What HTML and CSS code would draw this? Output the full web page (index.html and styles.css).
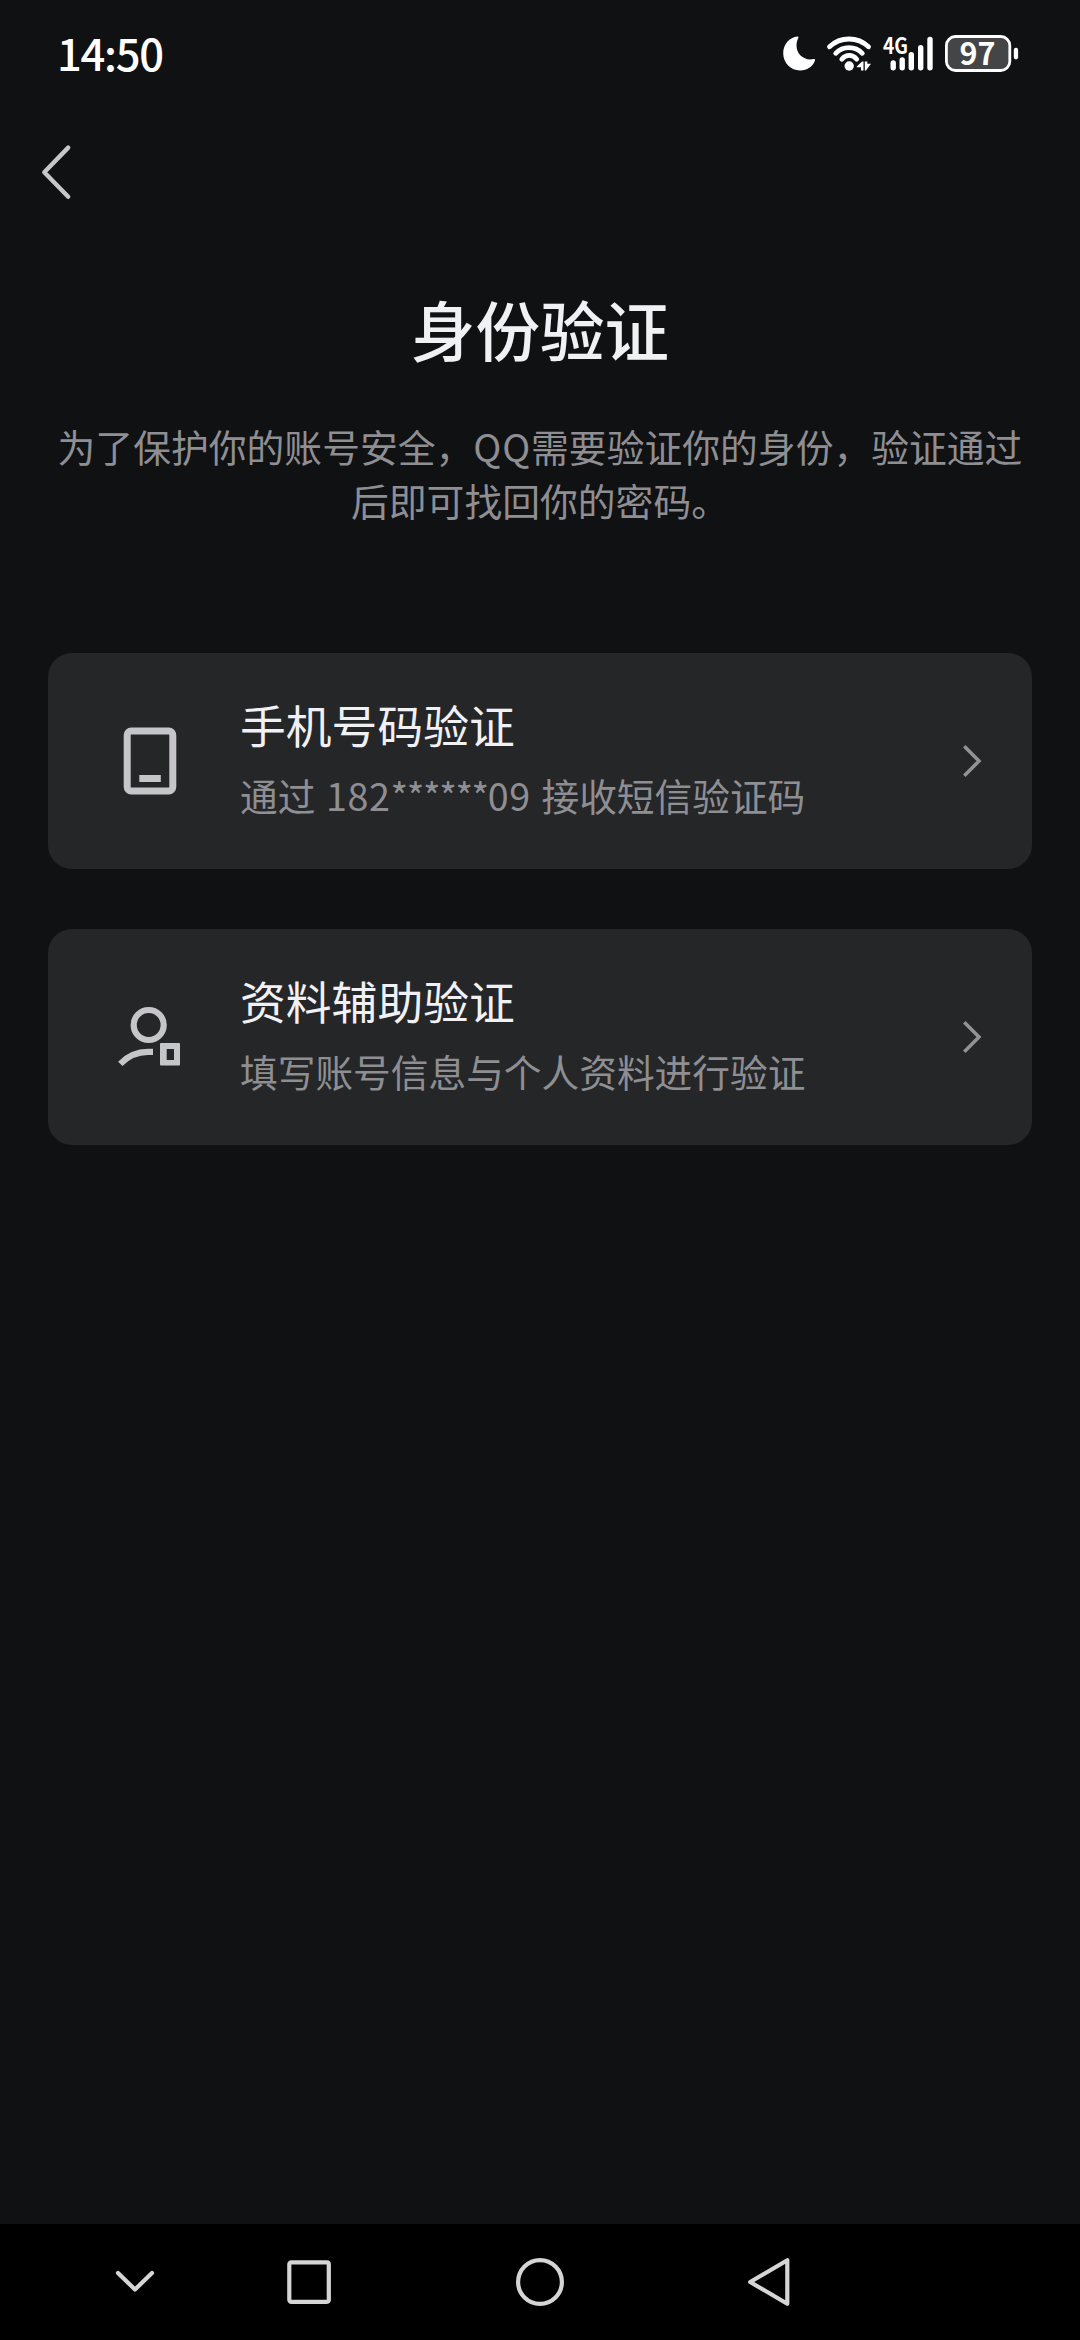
FILE: index.html
```html
<!DOCTYPE html>
<html lang="zh-CN">
<head>
<meta charset="utf-8">
<title>身份验证</title>
<link rel="stylesheet" href="styles.css">
</head>
<body>
<div class="screen">
  <header class="status-bar">
    <div class="clock">14:50</div>
    <div class="status-icons">
      <svg width="34" height="38" viewBox="0 0 34 38"><path fill="#fff" d="M15.5 1.6C7.5 2.3 1.2 9.500 1.200 18.300C1.200 28 8.800 35.500 18 35.500C25.500 35.500 31.500 31 33 25.300C33.200 24.300 32.500 23.800 31.500 24.100C22.500 26 14.500 19.500 14.500 10.500C14.500 7.500 15.300 5 16.300 3C16.700 2.200 16.400 1.600 15.500 1.600Z"/></svg>
      <svg width="46" height="38" viewBox="0 0 46 38">
        <g fill="none" stroke="#fff" stroke-width="4.800" stroke-linecap="round">
          <path d="M3.500 11.800C14.500 1.400 31.500 1.400 42.500 11.800"/>
          <path d="M9.700 18.300C17 10.700 29 10.700 36.300 18.300"/>
          <path d="M15.800 24.200C20 19.200 26.500 19.200 30.700 24.200"/>
        </g>
        <circle cx="23.200" cy="31" r="4.700" fill="#fff"/>
        <path fill="#fff" d="M36 26.500H37.500V35.500H35V32.300H30.800V31.500ZM38.800 26.500L41.300 26.500V28.800H45L40 35.500H38.800Z"/>
      </svg>
      <svg width="52" height="38" viewBox="0 0 52 38">
        <text class="network" x="1" y="18.500" textLength="25" lengthAdjust="spacingAndGlyphs">4G</text>
        <path fill="none" stroke="#fff" stroke-width="5.400" stroke-linecap="round" d="M11.200 28V32.700M20.200 25V32.700M29.300 19.800V32.700M38.700 12.800V32.700M48 4.500V32.700"/>
      </svg>
      <svg width="76" height="38" viewBox="0 0 76 38">
        <rect x="2.400" y="1.500" width="63.400" height="34" rx="9" fill="#444547" stroke="#fff" stroke-width="2.800"/>
        <rect x="69.800" y="12.800" width="4.300" height="11.600" rx="2.100" fill="#fff"/>
        <text class="battery" x="15.500" y="30" textLength="36" lengthAdjust="spacingAndGlyphs">97</text>
      </svg>
    </div>
  </header>
  <nav class="top-bar">
    <svg width="36" height="60" viewBox="0 0 36 60"><path d="M28.200 5.600L4.300 30.300L28.200 54.800" fill="none" stroke="#c7c7cb" stroke-width="4.400" stroke-linecap="round" stroke-linejoin="round"/></svg>
  </nav>
  <main class="content">
    <h1 class="title">身份验证</h1>
    <p class="intro">为了保护你的账号安全，<span class="brand">QQ</span>需要验证你的身份，验证通过<br>后即可找回你的密码。</p>
    <section class="options">
      <article class="card">
        <svg class="card-icon" width="72" height="72" viewBox="0 0 72 72">
          <rect x="13.200" y="6" width="45.600" height="60" rx="4" fill="none" stroke="#c6c6ca" stroke-width="7"/>
          <path d="M25.300 50H46.800V57H25.300Z" fill="#c6c6ca"/>
        </svg>
        <div class="card-text">
          <h2 class="card-title">手机号码验证</h2>
          <p class="card-desc">通过 <span class="digits">182</span><span class="stars">******</span><span class="digits">09</span> 接收短信验证码</p>
        </div>
        <svg width="20" height="36" viewBox="0 0 20 36"><path d="M1.300 3.300L16 18L1.300 32.700" fill="none" stroke="#939397" stroke-width="3.500"/></svg>
      </article>
      <article class="card">
        <svg class="card-icon" width="72" height="72" viewBox="0 0 72 72">
          <g fill="none" stroke="#c6c6ca" stroke-width="6.200">
            <circle cx="34.700" cy="24" r="15"/>
            <path d="M6.300 62.800Q18 50.900 34 50.900H39"/>
          </g>
          <path fill="#c6c6ca" fill-rule="evenodd" d="M47 42H65a1 1 0 0 1 1 1V63.500a1 1 0 0 1-1 1H47a1 1 0 0 1-1-1V43a1 1 0 0 1 1-1ZM52.700 48V59H60V48Z"/>
        </svg>
        <div class="card-text">
          <h2 class="card-title">资料辅助验证</h2>
          <p class="card-desc">填写账号信息与个人资料进行验证</p>
        </div>
        <svg width="20" height="36" viewBox="0 0 20 36"><path d="M1.300 3.300L16 18L1.300 32.700" fill="none" stroke="#939397" stroke-width="3.500"/></svg>
      </article>
    </section>
  </main>
  <footer class="nav-bar">
    <svg class="nav-hide" width="48" height="48" viewBox="0 0 48 48"><path d="M7 15L24 31.500L41 15"/></svg>
    <svg width="48" height="48" viewBox="0 0 48 48"><rect x="4.300" y="4.300" width="39.500" height="39.500" rx="2"/></svg>
    <svg width="48" height="48" viewBox="0 0 48 48"><circle cx="24" cy="24" r="21.900"/></svg>
    <svg width="48" height="48" viewBox="0 0 48 48"><path d="M3.200 24L40.300 2.200V45.800Z"/></svg>
  </footer>
</div>
</body>
</html>
```

FILE: styles.css
```css
* { box-sizing: border-box; }

body {
  margin: 0;
  background: #101113;
  font-family: "Noto Sans CJK SC", sans-serif;
}

svg { display: block; flex: none; overflow: visible; }

h1, h2, p { margin: 0; white-space: nowrap; }

.screen {
  display: flex;
  flex-direction: column;
  width: 1080px;
  height: 2340px;
  background: #101113;
}

.status-bar {
  display: flex;
  justify-content: space-between;
  align-items: center;
  height: 108px;
  padding: 0 60px 0 57px;
}

.clock {
  padding-bottom: 3px;
  color: #fff;
  font-size: 43.5px;
  font-weight: 500;
  line-height: 60px;
  letter-spacing: -1.300px;
}

.status-icons { display: flex; gap: 10px; }

.network {
  fill: #fff;
  font-size: 22.500px;
  font-weight: 700;
}

.battery {
  fill: #fff;
  font-size: 31px;
  font-weight: 700;
}

.top-bar {
  display: flex;
  align-items: center;
  height: 128px;
  padding-left: 40px;
}

.content {
  flex: 1;
  padding: 44px 48px 0;
}

.title {
  color: #f0f0f5;
  font-size: 64.600px;
  font-weight: 500;
  line-height: 96px;
  text-align: center;
}

.intro {
  margin-top: 43px;
  color: #8e8e93;
  font-size: 37.800px;
  line-height: 54px;
  text-align: center;
}

.brand { letter-spacing: 0.800px; }

.options {
  display: flex;
  flex-direction: column;
  gap: 60px;
  margin-top: 126px;
}

.card {
  display: flex;
  align-items: center;
  height: 216px;
  padding: 0 49px 0 66px;
  border-radius: 24px;
  background: #252628;
}

.card-text { flex: 1; padding: 0 0 5px 54px; }

.card-title {
  color: #f0f0f5;
  font-size: 45.800px;
  font-weight: 400;
  line-height: 72px;
}

.card-desc {
  color: #8e8e93;
  font-size: 37.700px;
  line-height: 70px;
  word-spacing: 2.200px;
}

.digits { letter-spacing: 0.600px; }

.stars { letter-spacing: -1.400px; }

.nav-bar {
  display: flex;
  align-items: center;
  gap: 183px;
  height: 116px;
  padding-left: 111px;
  background: #000;
  fill: none;
  stroke: #d5d5d5;
  stroke-width: 4.200px;
  stroke-linecap: round;
  stroke-linejoin: round;
}

.nav-hide { margin-right: -57px; }
```
